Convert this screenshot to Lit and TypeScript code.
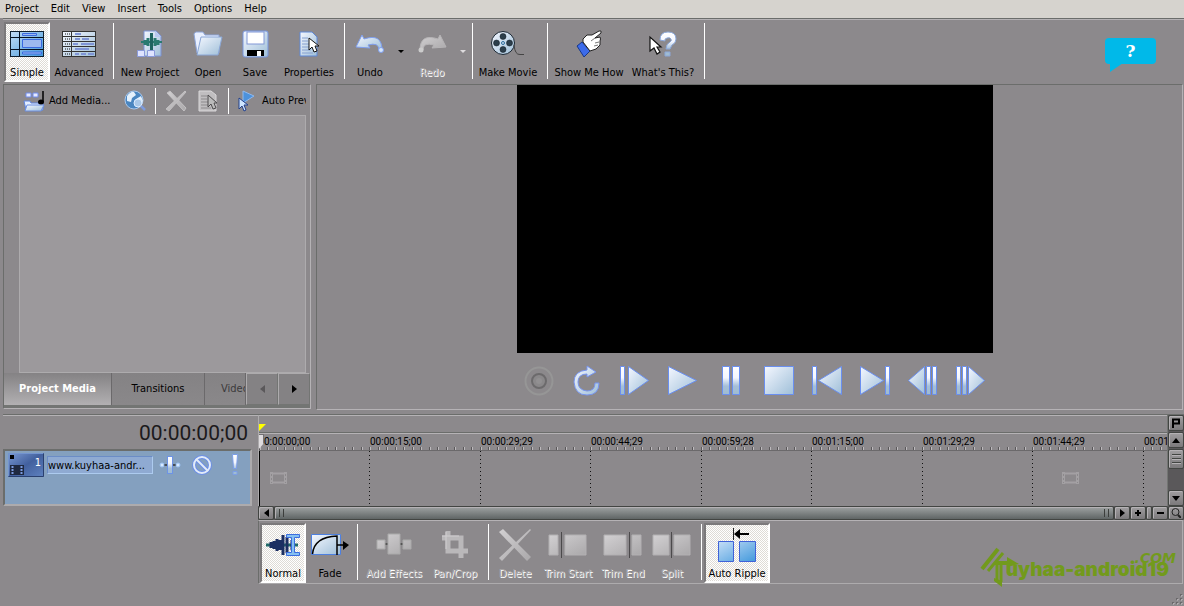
import { LitElement, html, svg, css, TemplateResult } from "lit";
import { customElement } from "lit/decorators.js";
import { classMap } from "lit/directives/class-map.js";
import { styleMap } from "lit/directives/style-map.js";

type Item =
  | { kind: "button"; label: string; icon: string; width: number; pressed?: boolean; disabled?: boolean }
  | { kind: "arrow"; label: string; width: number; disabled?: boolean }
  | { kind: "sep"; width: number };

const gradients = svg`
  <defs>
    <linearGradient id="ice" x1="0" y1="0" x2="1" y2="1">
      <stop offset="0" stop-color="#f4f7ff"/><stop offset="1" stop-color="#9fbfd8"/>
    </linearGradient>
    <linearGradient id="bar" x1="0" y1="0" x2="0" y2="1">
      <stop offset="0" stop-color="#fff"/><stop offset=".4" stop-color="#f4f7ff"/>
      <stop offset=".7" stop-color="#a5bfd8"/><stop offset="1" stop-color="#9fbcd0"/>
    </linearGradient>
    <linearGradient id="sky" x1="0" y1="0" x2="1" y2="1">
      <stop offset="0" stop-color="#c4ddf6"/><stop offset="1" stop-color="#4299dc"/>
    </linearGradient>
    <linearGradient id="gray" x1="0" y1="0" x2="1" y2="1">
      <stop offset="0" stop-color="#d2d0d2"/><stop offset="1" stop-color="#aaa8aa"/>
    </linearGradient>
  </defs>`;

const pointer = svg`<path d="M0 0v12l3-3 2 5 3-1-2-5h4z" fill="#fff" stroke="#111" stroke-width="1"/>`;

/* Each picture is drawn on a canvas of the given width and height. */
const icons: Record<string, [number, number, TemplateResult]> = {
  simple: [34, 26, svg`<rect x=".5" y=".5" width="33" height="25" fill="url(#sky)" stroke="#102030"/>
    <path d="M1 6.500h32M1 18.500h32M9.500 1v24" stroke="#061020"/>
    <path d="M12.500 2.500h14v2h-14zM12.500 8.500h19v8h-19zM12.500 21h19v2h-19z" fill="#9db9ef" stroke="#3b6ae0"/>`],
  advanced: [34, 26, svg`<rect x=".5" y=".5" width="33" height="25" fill="url(#ice)" stroke="#333"/>
    <path d="M1 5.500h32M1 10.500h32M1 15.500h32M1 20.500h32M9.500 1v24" stroke="#333"/>
    <path d="M3 3h5M3 8h5M3 13h5M3 18h5M3 23h5" stroke="#111" stroke-dasharray="1 1"/>
    <path d="M13 3h6M13 8h5M20 8h7M11 13h5M19 13h13M13 18h14M13 23h4M19 23h5M26 23h6" stroke="#8095d6" stroke-width="2"/>`],
  newproject: [26, 28, svg`<path d="M7 1h12l5 5v20H7z" fill="url(#ice)" stroke="#7d93d6"/><path d="M18 1v6h6z" fill="#b8c8f0"/>
    <path d="M4 12h21" stroke="#2a7a70" stroke-width="2"/><path d="M8 10v5M11 8v8M18 8v8M21 10v5" stroke="#2a7a70" stroke-width="3"/><path d="M14.500 3v18" stroke="#1f6460" stroke-width="3"/>
    <path d="M.5 20.500h7v6h-7zM10.500 20.500h7v6h-7z" fill="#dfe4ff" stroke="#8b9bda"/>`],
  open: [30, 26, svg`<path d="M1 3q0-1 2-2h7l2 3h14v18H4z" fill="#e8efff" stroke="#8ca4d8"/>
    <path d="M8 6h21l-4 18H4z" fill="url(#ice)" stroke="#8aa6d6"/>`],
  save: [27, 28, svg`<rect x="1" y="1" width="25" height="26" rx="2" fill="url(#ice)" stroke="#7794dd"/>
    <rect x="5" y="2" width="17" height="12" fill="#fff" stroke="#8197d6"/><path d="M5 20h17v6H5z" fill="#000"/><path d="M15 21h4v5h-4z" fill="#fff"/>`],
  properties: [20, 26, svg`<path d="M1 1h12l5 5v19H1z" fill="url(#ice)" stroke="#5e88d6"/><path d="M3 7h6M3 10h6M3 13h7M3 16h7M3 19h9M3 22h11" stroke="#86a0d0"/>
    <g transform="translate(10 7)">${pointer}</g>`],
  undo: [30, 22, svg`<path d="M1 14 7 2l2 4q18-6 18 11h-3q0-8-11-5l2 3z" fill="url(#ice)" stroke="#7f9ff0"/><circle cx="26" cy="17" r="2.500" fill="#d5e6fb" stroke="#7f9ff0"/>`],
  redo: [30, 22, svg`<path d="M29 14 23 2l-2 4Q3 0 3 17h3q0-8 11-5l-2 3z" fill="url(#gray)" stroke="#b6b4b6"/><circle cx="4" cy="17" r="2.500" fill="#ccc"/>`],
  movie: [34, 26, svg`<circle cx="12" cy="12" r="11.500" fill="url(#ice)" stroke="#1b2631"/><g fill="#2c3e4b" stroke="#0d171f" stroke-width=".5">
    <circle cx="12" cy="5.500" r="3"/><circle cx="12" cy="18.500" r="3"/><circle cx="5.500" cy="12" r="3"/><circle cx="18.500" cy="12" r="3"/></g>
    <circle cx="12" cy="12" r="1.500" fill="none" stroke="#2e6d9c"/><path d="M23 14q1 10 6 9.500h4" fill="none" stroke="#444"/>`],
  hand: [26, 28, svg`<path d="m1 16 5-4 8 9-6 6z" fill="#3c6bea" stroke="#173889"/><path d="M7 12V9l4-4h5l7-4q3-1 2 2l-6 5 5-1q1 2 0 4v4l-4 4-6 2z" fill="#fff" stroke="#222"/>
    <path d="m15 11 4-3M19 13l4-1M18 16l4-1" stroke="#777"/>`],
  whats: [30, 26, svg`<g transform="translate(2 6)"><path d="M0 0v14l4-3 3 6 3-2-3-5h4z" fill="#fff" stroke="#111" stroke-width="1.200"/></g>
    <path d="M12 9q0-8 8-8t8 7q0 4-4 6l-2 4h-4q0-5 4-7 2-1 1-3t-4-1-2 3zM17 21h5v4h-5z" fill="url(#bar)" stroke="#8ba8da"/>`],
  addmedia: [22, 22, svg`<path d="M3 3h5v4H3zM10 3h5v4h-5z" fill="#e5e9ff" stroke="#6f8bea"/><path d="M1 11h6l1 2h12v7H3z" fill="#e3edff" stroke="#5f85e0"/>
    <path d="M4 15h17l-3 6H2z" fill="url(#ice)" stroke="#6a8ee0"/><path d="M20 1v11" stroke="#000" stroke-width="1.500"/><ellipse cx="18" cy="12" rx="3" ry="2.500" fill="#000"/>`],
  globe: [22, 22, svg`<circle cx="10" cy="10" r="9" fill="#4a86c0" stroke="#a8c8ee"/><path d="M3 6q4-5 7-4l2 3-4 3-1 4-4-1zM12 9l5-3 2 5-3 4-3-1z" fill="#e4f0fb"/>
    <circle cx="14" cy="13" r="4" fill="#a9c8e8" stroke="#dcecff"/><path d="m17 16 4 4" stroke="#7d9bdc" stroke-width="2.500"/>`],
  cross: [22, 22, svg`<path d="m2 3 3-2 16 17-2 3z" fill="url(#gray)" stroke="#c2c0c2"/><path d="M21 2 4 21l-3-2L20 1z" fill="url(#gray)" stroke="#c2c0c2"/>`],
  page: [20, 22, svg`<path d="M1 1h12l5 4v16H1z" fill="#c0bec0" stroke="#dad8da"/><path d="M3 6h6M3 9h6M3 12h7M3 15h8M3 18h10" stroke="#8c8a8c"/>
    <g transform="translate(10 5)"><path d="M0 0v12l3-3 2 5 3-1-2-5h3z" fill="#bbb" stroke="#4c4a4c"/></g>`],
  autopreview: [18, 22, svg`<path d="M6 1v12l11-7z" fill="#4c92dc" stroke="#8fb8ee"/><g transform="translate(2 8)"><path d="M0 0v11l3-3 2 5 2-1-2-5h4z" fill="#cfe6ff" stroke="#23408c"/></g>`],
  record: [30, 30, svg`<circle cx="15" cy="15" r="13.500" fill="none" stroke="#969696" stroke-width="2"/><circle cx="15" cy="15" r="7" fill="#8a888a" stroke="#6c6a6c" stroke-width="2"/><circle cx="15" cy="15" r="3" fill="#929092"/>`],
  loop: [30, 32, svg`<path d="M15 5V1l9 6-9 5V9Q6 9 6 17t9 9q8 0 8-8h4q0 12-12 12T2 17Q2 6 15 5z" fill="url(#ice)" stroke="#7794ef"/>`],
  playstart: [30, 30, svg`<path d="M.5.5h4v28h-4z" fill="url(#bar)" stroke="#6a8ff0"/><path d="M8.500.5v28l20-14z" fill="url(#ice)" stroke="#6a8ff0"/>`],
  play: [30, 30, svg`<path d="M.5.5v28l28-14z" fill="url(#ice)" stroke="#6a8ff0"/>`],
  pause: [20, 30, svg`<path d="M1.500.5h7v28h-7zM11.500.5h7v28h-7z" fill="url(#bar)" stroke="#6a8ff0"/>`],
  stop: [30, 30, svg`<path d="M.5.5h29v28H.5z" fill="url(#ice)" stroke="#6a8ff0"/>`],
  gostart: [30, 30, svg`<path d="M.5.5h4v28h-4z" fill="url(#bar)" stroke="#6a8ff0"/><path d="M29.500.5v28l-23-14z" fill="url(#ice)" stroke="#6a8ff0"/>`],
  goend: [30, 30, svg`<path d="M25.500.5h4v28h-4z" fill="url(#bar)" stroke="#6a8ff0"/><path d="M.5.5v28l23-14z" fill="url(#ice)" stroke="#6a8ff0"/>`],
  prevframe: [30, 30, svg`<path d="M24.500.5h4v28h-4zM18.500.5h4v28h-4z" fill="url(#bar)" stroke="#6a8ff0"/><path d="M16.500.5v28l-16-14z" fill="url(#ice)" stroke="#6a8ff0"/>`],
  nextframe: [30, 30, svg`<path d="M.5.5h4v28h-4zM6.500.5h4v28h-4z" fill="url(#bar)" stroke="#6a8ff0"/><path d="M12.500.5v28l16-14z" fill="url(#ice)" stroke="#6a8ff0"/>`],
  normal: [36, 26, svg`<path d="M1 13h32" stroke="#216a68" stroke-width="3"/><path d="M6 10v6M9 9v8M12 7v12M15 8v10M18 3v20M22 5v16M27 8v10" stroke="#1c2f62" stroke-width="3"/>
    <path d="M21.500 2.500h13v3h-5v15h5v3h-13v-3h5v-15h-5z" fill="#86c0f0" stroke="#3a6de0"/>`],
  fade: [38, 24, svg`<path d="M.5 1.500h29v20H.5z" fill="url(#ice)" stroke="#4d80e0"/><path d="M1.500 21Q3 4 26 3v19M26 12h10" fill="none" stroke="#000" stroke-width="1.500"/><path d="m32 8 6 4-6 5z"/>`],
  effects: [36, 26, svg`<path d="M9 12h18" stroke="#555" stroke-width="2"/><path d="M1 8h8v9H1zM12 2h12v20H12zM27 8h8v9h-8z" fill="url(#gray)" stroke="#aaa"/>`],
  crop: [28, 28, svg`<path d="M7 0v20h20M1 7h19v20" fill="none" stroke="#bab8ba" stroke-width="5"/><path d="M5 1v17M1 5h17" stroke="#d0ced0"/>`],
  delete: [34, 34, svg`<path d="m1 4 4-3 28 28-4 4z" fill="url(#gray)"/><path d="M33 2 4 33l-3-3L32 1z" fill="url(#gray)"/>`],
  trimstart: [40, 26, svg`<path d="M1 3h9v20H1zM17 3h21v20H17z" fill="url(#gray)" stroke="#b2b0b2"/><path d="M13.500 0v26" stroke="#4c4a4c"/>`],
  trimend: [40, 26, svg`<path d="M1 3h22v20H1zM29 3h9v20h-9z" fill="url(#gray)" stroke="#b2b0b2"/><path d="M26.500 0v26" stroke="#4c4a4c"/>`],
  split: [40, 26, svg`<path d="M1 3h16v20H1zM22 3h16v20H22z" fill="url(#gray)" stroke="#b2b0b2"/><path d="M19.500 0v26" stroke="#4c4a4c"/>`],
  ripple: [38, 34, svg`<path d="M.5 13.500h15v20H.5zM21.500 13.500h16v20h-16z" fill="url(#sky)" stroke="#3f62d8"/><path d="M15.500 0v12" stroke="#222"/><path d="M19 6h12" stroke="#000" stroke-width="2"/><path d="m16 6 6-5v10z"/>`],
  thumb: [36, 24, svg`<rect width="36" height="24" fill="url(#film)"/><path d="M.5 23.500V.5h35" fill="none" stroke="#7394cf"/><path d="M.5 23.500h35V.5" fill="none" stroke="#2a406f"/><path d="M2 2h4v4H2z"/>
    <defs><linearGradient id="film" x1="0" y1="0" x2="1" y2="1"><stop offset="0" stop-color="#7c9bd4"/><stop offset=".5" stop-color="#42609e"/><stop offset="1" stop-color="#5f82c0"/></linearGradient></defs>
    <path d="M2 12h14v10H2z" fill="#1f2940"/><path d="M4.500 13v8M13.500 13v8" stroke="#7c9be0" stroke-width="2" stroke-dasharray="2 1"/>`],
  automation: [22, 20, svg`<path d="M5 10h12" stroke="#333" stroke-width="1.500"/><circle cx="3" cy="10" r="2" fill="#d8ebff" stroke="#9cc2f4"/><circle cx="19" cy="10" r="2" fill="#d8ebff" stroke="#9cc2f4"/><rect x="8.500" y="1.500" width="5" height="17" fill="url(#bar)" stroke="#6d93e6"/>`],
  mute: [22, 22, svg`<circle cx="11" cy="11" r="8" fill="none" stroke="#6d8fe6" stroke-width="4"/><path d="m5 5 12 12" stroke="#6d8fe6" stroke-width="4"/><circle cx="11" cy="11" r="8" fill="none" stroke="#e2ebf8" stroke-width="2"/><path d="m5 5 12 12" stroke="#e2ebf8" stroke-width="2"/>`],
  solo: [8, 22, svg`<path d="M1.500.5h5l-1 14h-3zM2 17.500h4v3H2z" fill="url(#bar)" stroke="#7d9fe8"/>`],
  clip: [20, 14, svg`<path d="M2.500 1v12M16.500 1v12" stroke="#a3a0a3" stroke-width="3"/><path d="M2 2.500h15M2 11.500h15" stroke="#a3a0a3" stroke-width="2"/><path d="M2.500 3v9M16.500 3v9" stroke="#8c898c" stroke-dasharray="2 2"/>`],
  left: [5, 8, svg`<path d="M5 0v8L0 4z"/>`],
  right: [5, 8, svg`<path d="M0 0v8l5-4z"/>`],
  up: [8, 5, svg`<path d="M0 5h8L4 0z"/>`],
  down: [8, 5, svg`<path d="M0 0h8L4 5z"/>`],
  plus: [8, 8, svg`<path d="M4 1v6M1 4h6" stroke="#000" stroke-width="2"/>`],
  minus: [8, 8, svg`<path d="M1 4h7" stroke="#000" stroke-width="2"/>`],
  lens: [10, 10, svg`<circle cx="4.500" cy="4" r="3.500" fill="none" stroke="#222"/><path d="m7 7 3 3" stroke="#222" stroke-width="2"/>`],
  flag: [10, 10, svg`<path d="M2 10V1.500h6v4H3" fill="none" stroke="#000" stroke-width="2"/>`],
  grip: [12, 12, svg`<path d="M9 1h2v2H9zM5 5h2v2H5zM9 5h2v2H9zM1 9h2v2H1zM5 9h2v2H5zM9 9h2v2H9z" fill="#6b696b"/><path d="M11 2v1h-1M7 6v1H6M11 6v1h-1M3 10v1H2M7 10v1H6M11 10v1h-1" fill="none" stroke="#c6c3c6"/>`],
};

const icon = (name: string) => {
  const [w, h, body] = icons[name];
  return html`<svg class="icon" width=${w} height=${h} viewBox="0 0 ${w} ${h}" aria-hidden="true">${gradients}${body}</svg>`;
};

const mainTools: Item[] = [
  { kind: "button", label: "Simple", icon: "simple", width: 46, pressed: true },
  { kind: "button", label: "Advanced", icon: "advanced", width: 58 },
  { kind: "sep", width: 10 },
  { kind: "button", label: "New Project", icon: "newproject", width: 64 },
  { kind: "button", label: "Open", icon: "open", width: 52 },
  { kind: "button", label: "Save", icon: "save", width: 42 },
  { kind: "button", label: "Properties", icon: "properties", width: 66 },
  { kind: "sep", width: 4 },
  { kind: "button", label: "Undo", icon: "undo", width: 48 },
  { kind: "arrow", label: "Undo history", width: 14 },
  { kind: "button", label: "Redo", icon: "redo", width: 48, disabled: true },
  { kind: "arrow", label: "Redo history", width: 14, disabled: true },
  { kind: "sep", width: 4 },
  { kind: "button", label: "Make Movie", icon: "movie", width: 68 },
  { kind: "sep", width: 10 },
  { kind: "button", label: "Show Me How", icon: "hand", width: 74 },
  { kind: "button", label: "What's This?", icon: "whats", width: 74 },
  { kind: "sep", width: 8 },
];

const editTools: Item[] = [
  { kind: "button", label: "Normal", icon: "normal", width: 46, pressed: true },
  { kind: "button", label: "Fade", icon: "fade", width: 48 },
  { kind: "sep", width: 6 },
  { kind: "button", label: "Add Effects", icon: "effects", width: 68, disabled: true },
  { kind: "button", label: "Pan/Crop", icon: "crop", width: 54, disabled: true },
  { kind: "sep", width: 12 },
  { kind: "button", label: "Delete", icon: "delete", width: 42, disabled: true },
  { kind: "button", label: "Trim Start", icon: "trimstart", width: 64, disabled: true },
  { kind: "button", label: "Trim End", icon: "trimend", width: 46, disabled: true },
  { kind: "button", label: "Split", icon: "split", width: 52, disabled: true },
  { kind: "sep", width: 6 },
  { kind: "button", label: "Auto Ripple", icon: "ripple", width: 66, pressed: true },
];

const transport: [string, string][] = [
  ["record", "Record"], ["loop", "Loop playback"], ["playstart", "Play from start"], ["play", "Play"], ["pause", "Pause"],
  ["stop", "Stop"], ["gostart", "Go to start"], ["goend", "Go to end"], ["prevframe", "Previous frame"], ["nextframe", "Next frame"],
];

const marks = ["0:00:00;00", "00:00:15;00", "00:00:29;29", "00:00:44;29", "00:00:59;28", "00:01:15;00", "00:01:29;29", "00:01:44;29", "00:01:59;28"];
const markAt = (i: number) => Math.floor((i * 221) / 2);

@customElement("app-root")
export class AppRoot extends LitElement {
  static styles = css`
    :host {
      display: flex; flex-direction: column; height: 100vh; overflow: hidden;
      background: #8c898c; color: #000;
      font: 11px/14px "DejaVu Sans Condensed", Tahoma, "Noto Sans", sans-serif;
    }
    * { box-sizing: border-box; }
    button, input { font: inherit; color: inherit; margin: 0; padding: 0; border: 0; background: none; border-radius: 0; }
    button { display: flex; align-items: center; justify-content: center; white-space: nowrap; }
    .icon { display: block; flex: none; }

    .menu { display: flex; flex: none; height: 18px; background: #d6d3ce; padding-left: 5px; }
    .menu button { margin-right: 12px; align-items: flex-start; padding-top: 2px; }
    .tools { display: flex; align-items: stretch; }
    .main-tools { flex: none; height: 66px; margin-left: 3px; padding: 3px 28px 2px 1px; border-top: 1px solid #6b6d6b; box-shadow: inset 0 1px #b5b2b5; }
    .tool { flex: none; flex-direction: column; justify-content: flex-start; padding-top: 4px; }
    .art { display: flex; flex: none; height: 36px; align-items: center; justify-content: center; }
    .caption { margin-top: 4px; }
    .pressed {
      border: 2px solid; border-color: #7b797b #fff #fff #7b797b; padding-top: 2px;
      background: repeating-conic-gradient(#dedbd6 0 25%, #fff 0 50%) 0 0 / 2px 2px;
    }
    .tool:disabled { color: #8c898c; }
    .tool:disabled .caption { color: #a8a6a8; text-shadow: 1px 1px #fff; }
    .arrow { flex: none; align-items: flex-end; padding-bottom: 29px; }
    .caret { border: 3px solid transparent; border-top-color: #000; border-bottom: 0; }
    .arrow:disabled .caret { border-top-color: #dedcde; }
    .sep { flex: none; display: flex; justify-content: center; padding: 1px 0 3px; }
    .rule { width: 1px; background: #fff; }
    .help {
      position: relative; width: 51px; height: 26px; margin: 16px 0 0 auto; border-radius: 4px; background: #00b9e9; color: #fff;
      font: bold 17px/22px "DejaVu Serif", "Liberation Serif", serif;
    }
    .tail { position: absolute; left: 5px; top: 25px; width: 13px; height: 9px; background: #00b9e9; clip-path: polygon(0 0, 100% 0, 0 100%); }

    .work { display: flex; flex: 1; min-height: 0; gap: 5px; padding: 0 1px 4px 3px; }
    .panel { border: 1px solid; border-color: #6b6d6b #b5b2b5 #b5b2b5 #6b6d6b; }
    .media { display: flex; flex-direction: column; width: 308px; flex: none; margin-bottom: 1px; }
    .media-tools { display: flex; align-items: center; flex: none; height: 30px; padding: 1px 4px 0 19px; overflow: hidden; }
    .media-tools button { flex: none; }
    .media-sep { flex: none; width: 1px; height: 26px; margin: 0 4px; background: #fff; }
    .add { gap: 4px; width: 96px; justify-content: flex-start; }
    .square { width: 32px; }
    .preview { gap: 7px; padding-left: 4px; }
    .clipped { display: flex; flex: 1; overflow: hidden; }
    .bin { flex: 1; margin: 0 4px 0 15px; border: 1px solid #adabad; background: #9c999c; }
    .tabs { display: flex; flex: none; height: 35px; padding-bottom: 3px; background: #737573; }
    .tab { width: 93px; flex: none; border-right: 1px solid #6b696b; background: linear-gradient(#848284, #8a888a); }
    .tab-on { width: 108px; color: #fff; font-weight: bold; background: linear-gradient(#848284, #b2b0b2); }
    .tab-cut { width: auto; min-width: 0; flex: 1; overflow: hidden; justify-content: flex-start; padding-left: 16px; color: #3b3a3b; }
    .tab-nav { width: 32px; flex: none; border: 1px solid; border-color: #adabad #737573 #737573 #adabad; background: #848284; }
    .tab-nav:disabled { fill: #5a585a; }

    .viewer { display: flex; flex-direction: column; flex: 1; min-width: 0; align-items: center; padding-left: 11px; }
    .stage { flex: 1; min-height: 0; display: flex; }
    .screen { height: 100%; aspect-ratio: 16 / 9; background: #000; }
    .transport { display: flex; flex: none; height: 56px; align-items: center; }
    .transport button { width: 48px; height: 32px; }

    .timeline { display: flex; flex: none; margin-left: 3px; gap: 6px; border-top: 1px solid #6b6d6b; box-shadow: inset 0 1px #b5b2b5; height: 106px; }
    .heads { width: 249px; flex: none; display: flex; flex-direction: column; padding-top: 1px; }
    .clock { height: 33px; padding-right: 4px; text-align: right; color: #1c1a1c; font: 21px/34px Roboto, "Noto Sans", sans-serif; }
    .head { display: flex; align-items: flex-start; height: 57px; padding: 2px 11px 0 3px; border: 2px solid; border-color: #6b6d6b #adabad #adabad #6b6d6b; background: #84a0bf; }
    .thumb { position: relative; margin-right: 3px; }
    .number { position: absolute; right: 3px; top: 3px; color: #fff; }
    .track-name { width: 106px; height: 18px; margin: 3px 6px 0 0; border: 1px solid; border-color: #6b8cc6 #adcbef #adcbef #6b8cc6; background: #8faad2; }
    .head button { height: 24px; }
    .mute { margin: 0 18px 0 10px; }

    .canvas { flex: 1; min-width: 0; display: flex; flex-direction: column; }
    .upper { display: flex; height: 91px; }
    .lanes { position: relative; flex: 1; min-width: 0; display: flex; flex-direction: column; border-left: 1px solid #adabad; border-right: 1px solid #737573; }
    .markers { height: 18px; padding-top: 9px; border-bottom: 1px solid #6b6d6b; }
    .marker { width: 7px; height: 7px; background: #ff0; clip-path: polygon(0 0, 100% 0, 0 100%); }
    .marks { display: flex; flex: 1; overflow: hidden; border-top: 1px solid #b5b2b5; }
    .mark { flex: none; display: flex; flex-direction: column; font: 10px/15px Roboto, "Noto Sans", sans-serif; }
    .mark-label { height: 13px; padding-left: 1px; white-space: nowrap; }
    .mark:first-child .mark-label { padding-left: 5px; }
    .ticks {
      height: 4px; border-bottom: 1px solid #6b696b; flex: none;
      background: repeating-linear-gradient(90deg, #5a585a 0 1px, #bdbabd 1px 2px, transparent 2px calc(100% / 13));
    }
    .grid { flex: 1; background: repeating-linear-gradient(#111 0 1px, transparent 1px 4px) 0 0 / 1px 100% no-repeat; }
    .mark:first-child .grid { background: linear-gradient(#000, #000) 0 0 / 1px 100% no-repeat; }
    .playhead { position: absolute; left: 0; top: 19px; width: 5px; height: 15px; background: #dedbde; border: 1px solid #737173; border-left: 0; clip-path: polygon(0 0, 100% 0, 100% 60%, 0 100%); }
    .ghost { position: absolute; left: 10px; top: 56px; }
    .ghost-far { left: 802px; }
    .vscroll { width: 16px; display: flex; flex-direction: column; gap: 1px; background: #5a585a; }
    .key { width: 16px; height: 16px; flex: none; border: 1px solid #424542; border-radius: 2px; box-shadow: inset 1px 1px #b5b2b5; background: linear-gradient(#a09ea0, #7b797b); }
    .vthumb { height: 20px; margin-bottom: auto; flex-direction: column; gap: 2px; }
    .vgrip { width: 9px; height: 2px; border-top: 1px solid #424542; background: #b5b2b5; }
    .hscroll { display: flex; height: 14px; background: #5a585a; }
    .hscroll .key { height: 14px; }
    .hscroll .hthumb { flex: 1; justify-content: space-between; padding: 0 4px; background: linear-gradient(#9ea2a2, #5f6565); }
    .hgrip { width: 5px; height: 8px; border: solid #3c3e3c; border-width: 0 1px; }
    .hscroll .nub { width: 6px; }

    .lower { display: flex; flex: none; height: 64px; margin: 0 1px 0 258px; padding: 2px 0 0 1px; border: 1px solid; border-color: #b5b2b5 #adabad #adabad #6b6d6b; }
    .brand { position: relative; display: flex; align-items: flex-end; margin-left: auto; padding: 0 13px 1px 0; color: #729a1c; }
    .roof { margin: 0 -14px -5px 0; flex: none; }
    .word { font: 900 19px/24px Inter, sans-serif; }
    .com { position: absolute; right: 6px; top: 27px; font: italic bold 14px/16px "DejaVu Sans", sans-serif; }
    .status { display: flex; flex: none; height: 22px; justify-content: flex-end; align-items: flex-end; padding: 0 1px 1px 0; }
  `;

  private tool(item: Item) {
    const width = styleMap({ width: `${item.width}px` });
    if (item.kind === "sep") return html`<div class="sep" style=${width}><div class="rule"></div></div>`;
    if (item.kind === "arrow")
      return html`<button class="arrow" style=${width} aria-label=${item.label} ?disabled=${item.disabled}><span class="caret"></span></button>`;
    return html`<button class=${classMap({ tool: true, pressed: !!item.pressed })} style=${width} ?disabled=${item.disabled}>
      <span class="art">${icon(item.icon)}</span><span class="caption">${item.label}</span></button>`;
  }

  private key(name: string, label: string) {
    return html`<button class="key" aria-label=${label}>${icon(name)}</button>`;
  }

  render() {
    return html`
      <nav class="menu">${["Project", "Edit", "View", "Insert", "Tools", "Options", "Help"].map((m) => html`<button>${m}</button>`)}</nav>
      <header class="tools main-tools">
        ${mainTools.map((t) => this.tool(t))}
        <button class="help" aria-label="Help">?<span class="tail"></span></button>
      </header>
      <main class="work">
        <section class="panel media">
          <div class="media-tools">
            <button class="add">${icon("addmedia")}Add Media...</button>
            <button class="square" aria-label="Get media from the web">${icon("globe")}</button>
            <div class="media-sep"></div>
            <button class="square" aria-label="Remove" disabled>${icon("cross")}</button>
            <button class="square" aria-label="Media properties" disabled>${icon("page")}</button>
            <span class="clipped"><span class="media-sep"></span><button class="preview">${icon("autopreview")}Auto Preview</button></span>
          </div>
          <div class="bin"></div>
          <div class="tabs">
            <button class="tab tab-on">Project Media</button>
            <button class="tab">Transitions</button>
            <button class="tab tab-cut">Video FX</button>
            <button class="tab-nav" aria-label="Previous tabs" disabled>${icon("left")}</button>
            <button class="tab-nav" aria-label="More tabs">${icon("right")}</button>
          </div>
        </section>
        <section class="panel viewer">
          <div class="stage"><div class="screen"></div></div>
          <div class="transport">${transport.map(([i, l]) => html`<button aria-label=${l}>${icon(i)}</button>`)}</div>
        </section>
      </main>
      <section class="timeline">
        <div class="heads">
          <div class="clock">00:00:00;00</div>
          <div class="head">
            <div class="thumb">${icon("thumb")}<span class="number">1</span></div>
            <input class="track-name" aria-label="Track name" value="www.kuyhaa-andr..." />
            <button aria-label="Automation">${icon("automation")}</button>
            <button class="mute" aria-label="Mute">${icon("mute")}</button>
            <button aria-label="Solo">${icon("solo")}</button>
          </div>
        </div>
        <div class="canvas">
          <div class="upper">
            <div class="lanes">
              <div class="markers"><div class="marker"></div></div>
              <div class="marks">
                ${marks.map((m, i) => html`<div class="mark" style=${styleMap({ width: `${markAt(i + 1) - markAt(i)}px` })}>
                  <span class="mark-label">${m}</span><div class="ticks"></div><div class="grid"></div></div>`)}
              </div>
              <div class="playhead"></div>
              <div class="ghost">${icon("clip")}</div>
              <div class="ghost ghost-far">${icon("clip")}</div>
            </div>
            <div class="vscroll">
              ${this.key("flag", "Markers")}${this.key("up", "Scroll up")}
              <button class="key vthumb" aria-label="Vertical scroll position"><span class="vgrip"></span><span class="vgrip"></span><span class="vgrip"></span></button>
              ${this.key("down", "Scroll down")}
            </div>
          </div>
          <div class="hscroll">
            ${this.key("left", "Scroll left")}
            <button class="key hthumb" aria-label="Horizontal scroll position"><span class="hgrip"></span><span class="hgrip"></span></button>
            ${this.key("right", "Scroll right")}${this.key("plus", "Zoom in")}
            <button class="key nub" aria-label="Zoom level"></button>
            ${this.key("minus", "Zoom out")}${this.key("lens", "Zoom tool")}
          </div>
        </div>
      </section>
      <section class="lower">
        ${editTools.map((t) => this.tool(t))}
        <div class="brand">
          <svg class="roof" width="40" height="40" viewBox="0 0 40 40" aria-hidden="true" fill="none" stroke="#729a1c">
            <path d="M2 22 18 2" stroke-width="4"/><path d="M8 24 23 6" stroke-width="3"/>
            <path d="M15 16h16" stroke-width="4"/><path d="M27 10v10l12-3z" fill="#729a1c" stroke="none"/>
            <path d="M17 17v18M21 17v18" stroke-width="3"/><path d="M14 31v3l8 6v-6z" fill="#729a1c" stroke="none"/>
          </svg>
          <span class="word">uyhaa-android19</span><span class="com">.COM</span>
        </div>
      </section>
      <footer class="status">${icon("grip")}</footer>`;
  }
}
